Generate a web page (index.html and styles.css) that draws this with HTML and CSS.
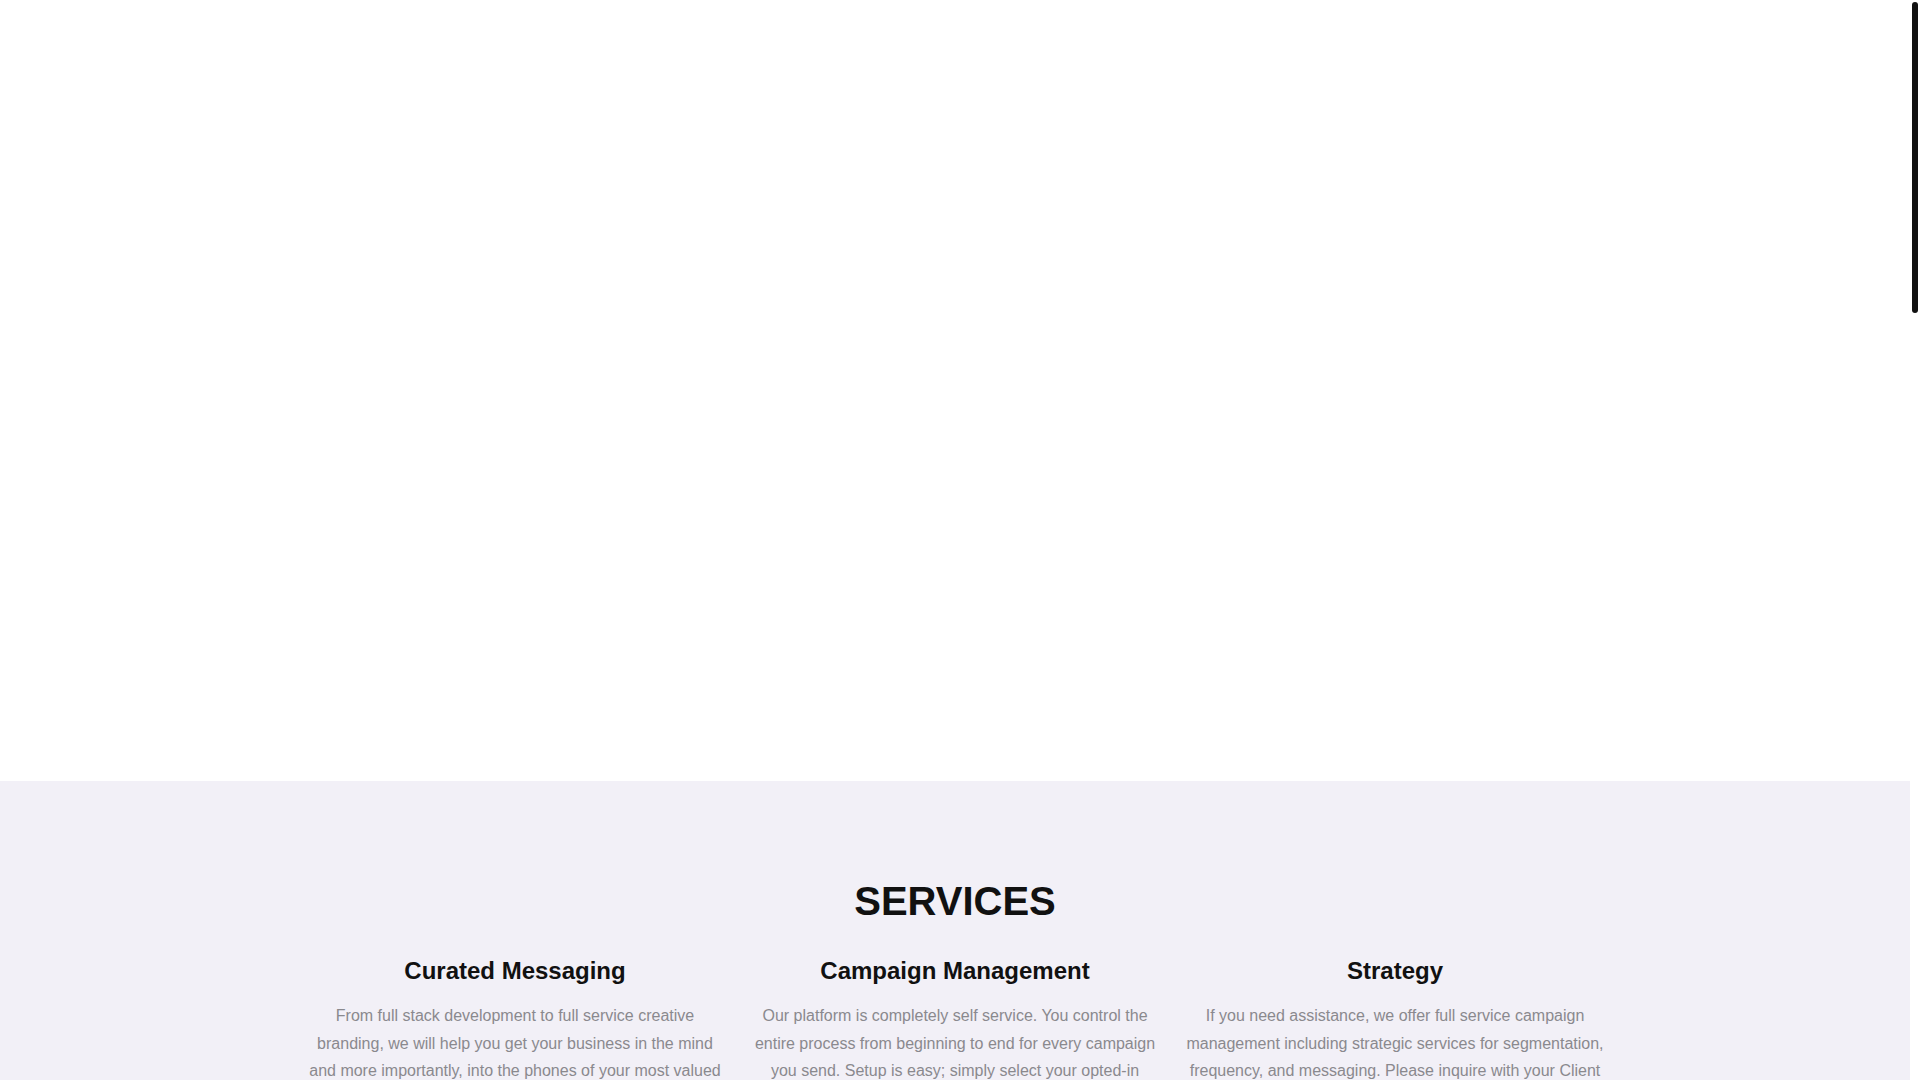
FILE: index.html
```html
<!DOCTYPE html>
<html lang="en">
<head>
<meta charset="utf-8">
<title>Services</title>
<link rel="stylesheet" href="styles.css">
</head>
<body>
  <main class="page">
    <section class="hero"></section>
    <section class="services">
      <div class="container">
        <h2 class="services-title">SERVICES</h2>
        <div class="row">
          <div class="col">
            <h3 class="col-title">Curated Messaging</h3>
            <p class="col-text">From full stack development to full service creative branding, we will help you get your business in the mind and more importantly, into the phones of your most valued customers. Our team crafts every message to match your brand voice and engage your audience.</p>
          </div>
          <div class="col">
            <h3 class="col-title">Campaign Management</h3>
            <p class="col-text">Our platform is completely self service. You control the entire process from beginning to end for every campaign you send. Setup is easy; simply select your opted-in audience, write your message, schedule it and track the results in real time.</p>
          </div>
          <div class="col">
            <h3 class="col-title">Strategy</h3>
            <p class="col-text">If you need assistance, we offer full service campaign management including strategic services for segmentation, frequency, and messaging. Please inquire with your Client Success Manager for more information about our strategic services.</p>
          </div>
        </div>
      </div>
    </section>
  </main>
  <div class="scrollbar" aria-hidden="true"><div class="scrollbar-thumb"></div></div>
</body>
</html>
```
FILE: styles.css
```css
html {
  overflow: hidden;
}

body {
  margin: 0;
  font-family: "Liberation Sans", Arial, sans-serif;
  background: #ffffff;
  color: #111111;
}

.page {
  margin-right: 10px;
}

.hero {
  height: 781px;
  background: #ffffff;
}

.services {
  background: #f2f0f7;
  padding: 96px 0 100px;
}

.container {
  width: 1320px;
  margin: 0 auto;
}

.services-title {
  margin: 0 0 32px;
  font-size: 40px;
  line-height: 48px;
  font-weight: 700;
  text-align: center;
  color: #111111;
}

.row {
  display: grid;
  grid-template-columns: repeat(3, 1fr);
}

.col {
  padding: 0 9px;
  text-align: center;
}

.col-title {
  margin: 0 0 16px;
  font-size: 24px;
  line-height: 28.8px;
  font-weight: 700;
  color: #111111;
}

.col-text {
  margin: 0;
  font-size: 16px;
  line-height: 27.8px;
  color: #8a898e;
}

.scrollbar {
  position: fixed;
  top: 0;
  right: 0;
  width: 10px;
  height: 100vh;
  background: #ffffff;
}

.scrollbar-thumb {
  margin: 2px 2px 0;
  height: 311px;
  background: #111111;
  border-radius: 3px;
}
```
